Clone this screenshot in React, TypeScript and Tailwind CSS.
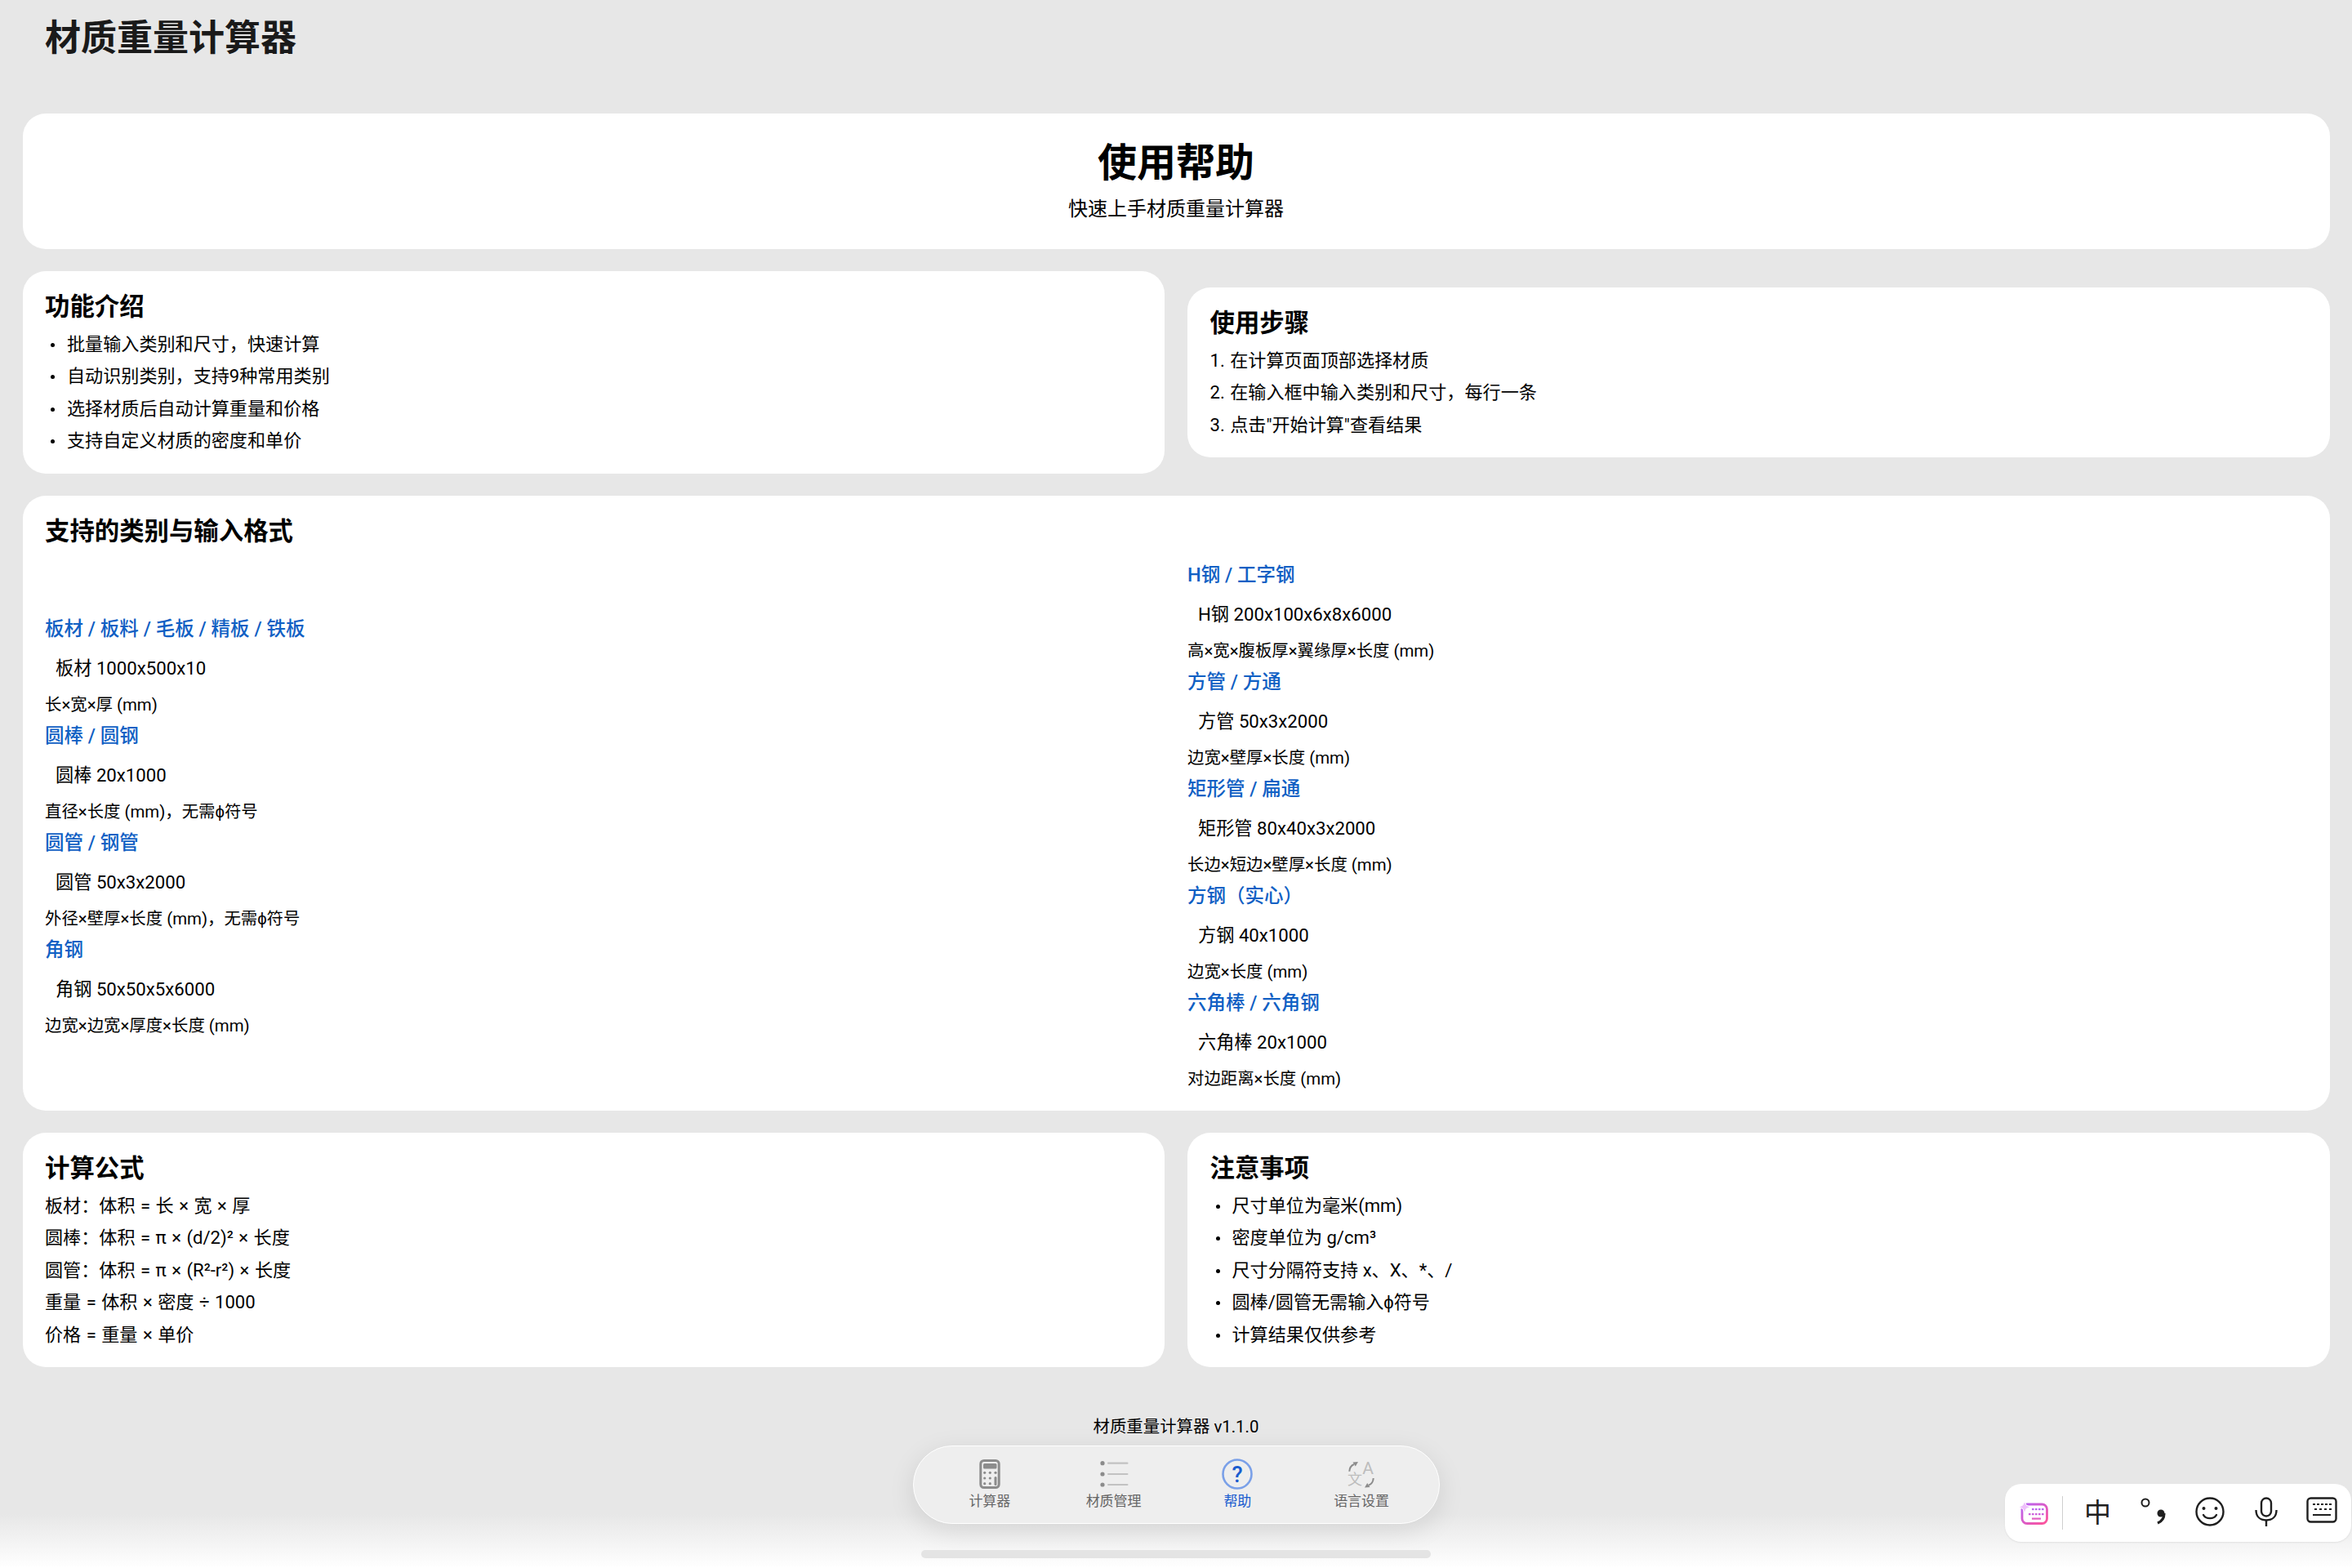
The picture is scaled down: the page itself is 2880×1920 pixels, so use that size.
import type React from "react";

const font = "font-['Roboto','Noto_Sans_CJK_SC',sans-serif]";

// full-width punctuation
const comma = "\uFF0C";
const colon = "\uFF1A";

const leftFormats = [
  { name: "板材 / 板料 / 毛板 / 精板 / 铁板", sample: "板材 1000x500x10", note: "长×宽×厚 (mm)" },
  { name: "圆棒 / 圆钢", sample: "圆棒 20x1000", note: `直径×长度 (mm)${comma}无需ϕ符号` },
  { name: "圆管 / 钢管", sample: "圆管 50x3x2000", note: `外径×壁厚×长度 (mm)${comma}无需ϕ符号` },
  { name: "角钢", sample: "角钢 50x50x5x6000", note: "边宽×边宽×厚度×长度 (mm)" }
];

const rightFormats = [
  { name: "H钢 / 工字钢", sample: "H钢 200x100x6x8x6000", note: "高×宽×腹板厚×翼缘厚×长度 (mm)" },
  { name: "方管 / 方通", sample: "方管 50x3x2000", note: "边宽×壁厚×长度 (mm)" },
  { name: "矩形管 / 扁通", sample: "矩形管 80x40x3x2000", note: "长边×短边×壁厚×长度 (mm)" },
  { name: "方钢\uFF08实心\uFF09", sample: "方钢 40x1000", note: "边宽×长度 (mm)" },
  { name: "六角棒 / 六角钢", sample: "六角棒 20x1000", note: "对边距离×长度 (mm)" }
];

function Card({ className = "", children }: { className?: string; children: React.ReactNode }) {
  return <section className={`rounded-[28px] bg-white px-[27.5px] ${className}`}>{children}</section>;
}

function CardTitle({ children }: { children: React.ReactNode }) {
  return <h2 className="text-[30.4px] font-bold leading-[44px] text-black">{children}</h2>;
}

function Line({ children }: { children: React.ReactNode }) {
  return <p className="text-[22.1px] leading-[39.4px] text-black [word-spacing:1px]">{children}</p>;
}

function Bullet({ children }: { children: React.ReactNode }) {
  return (
    <li className="relative pl-[27px] text-[22.1px] leading-[39.4px] text-black">
      <span className="absolute left-[7px] top-[18px] h-[5px] w-[5px] rounded-full bg-black" />
      {children}
    </li>
  );
}

function FormatColumn({ items }: { items: typeof leftFormats }) {
  return (
    <div>
      {items.map((item) => (
        <div key={item.name} className="pb-[3px]">
          <h3 className="text-[23.5px] font-medium leading-[38px] text-[#1060c4]">{item.name}</h3>
          <p className="mt-[11px] pl-[13px] text-[22.2px] leading-[36px] text-black">{item.sample}</p>
          <p className="mt-[11px] text-[20.4px] leading-[32px] text-black">{item.note}</p>
        </div>
      ))}
    </div>
  );
}

function CalculatorIcon() {
  return (
    <svg width="36" height="36" viewBox="0 0 36 36" fill="#8c8c8c">
      <rect x="6.800" y="1.500" width="22.400" height="33" rx="4" fill="none" stroke="#8c8c8c" strokeWidth="3" />
      <rect x="10" y="5" width="16.500" height="6.500" rx="1.500" />
      {[11.700, 18.300, 25].map((x) => (
        <circle key={x} cx={x} cy="16.300" r="1.600" />
      ))}
      {[11.700, 18.300].map((x) => (
        <circle key={x} cx={x} cy="23" r="1.600" />
      ))}
      {[11.700, 18.300].map((x) => (
        <circle key={x} cx={x} cy="29.700" r="1.600" />
      ))}
      <rect x="23.500" y="21" width="3" height="11" rx="1.500" />
    </svg>
  );
}

function ListIcon() {
  return (
    <svg width="36" height="36" viewBox="0 0 36 36">
      {[4.700, 18, 31].map((y) => (
        <g key={y}>
          <circle cx="4" cy={y} r="2.600" fill="#8c8c8c" />
          <rect x="10" y={y - 1.100} width="25.500" height="2.200" rx="1.100" fill="#c2c2c2" />
        </g>
      ))}
    </svg>
  );
}

function HelpIcon() {
  return (
    <svg width="38" height="38" viewBox="0 0 38 38" className="-my-[1px]">
      <circle cx="19" cy="19" r="17.500" fill="none" stroke="#7aa0e8" strokeWidth="2.600" />
      <text x="19" y="28.500" textAnchor="middle" fontSize="27" fontWeight="500" fill="#1a5ccf" fontFamily="Roboto, sans-serif">
        ?
      </text>
    </svg>
  );
}

function LanguageIcon() {
  return (
    <svg width="36" height="36" viewBox="0 0 36 36">
      <text x="26" y="18" textAnchor="middle" fontSize="21" fill="#bdbdbd" fontFamily="Roboto, sans-serif">
        A
      </text>
      <text x="10" y="31" textAnchor="middle" fontSize="18" fill="#bdbdbd" fontFamily="'Noto Sans CJK SC', sans-serif">
        文
      </text>
      <path d="M3.300 14.700C3.500 10.500 5.500 7.500 9 6" fill="none" stroke="#8c8c8c" strokeWidth="2" />
      <path d="M7.500 3.500L14 3l-3.200 5.500z" fill="#8c8c8c" />
      <path d="M32.700 23c-.2 4.200-2.200 7.200-5.700 8.700" fill="none" stroke="#8c8c8c" strokeWidth="2" />
      <path d="M28.500 34l-6.500.5 3.200-5.500z" fill="#8c8c8c" />
    </svg>
  );
}

function TabBar() {
  const tabs = [
    { label: "计算器", icon: <CalculatorIcon />, active: false },
    { label: "材质管理", icon: <ListIcon />, active: false },
    { label: "帮助", icon: <HelpIcon />, active: true },
    { label: "语言设置", icon: <LanguageIcon />, active: false }
  ];
  return (
    <nav className="absolute left-[1118px] top-[1770px] grid h-[96px] w-[645px] grid-cols-4 rounded-[48px] border border-white bg-[#eeeeee] pl-[17px] pr-[19px] pt-[16px] shadow-[0_8px_32px_rgba(0,0,0,0.10)]">
      {tabs.map((tab) => (
        <div key={tab.label} className="flex flex-col items-center">
          {tab.icon}
          <span className={`mt-[4px] text-[17px] leading-[22px] ${tab.active ? "text-[#1a5ccf]" : "text-[#666666]"}`}>
            {tab.label}
          </span>
        </div>
      ))}
    </nav>
  );
}

function ImeBar() {
  return (
    <div className="absolute left-[2455px] top-[1817px] flex h-[71px] w-[424px] items-center rounded-[20px] bg-white pl-[17px] shadow-[0_1px_2px_rgba(0,0,0,0.08)]">
      <svg width="38" height="30" viewBox="0 0 38 30">
        <defs>
          <linearGradient id="ime-ai" x1="0" y1="0" x2="1" y2="1">
            <stop offset="0" stopColor="#b562f5" />
            <stop offset="1" stopColor="#ff5599" />
          </linearGradient>
        </defs>
        <rect x="4" y="4" width="30.500" height="23.500" rx="6" fill="none" stroke="url(#ime-ai)" strokeWidth="2.800" />
        <path d="M7 0l2 5 5 2.500-5 2-2 5.500-2-5.500-5-2 5-2.500z" fill="#eec0fb" stroke="#fff" strokeWidth="1" />
        {[16, 20, 24, 28].map((x) => (
          <rect key={x} x={x} y="9" width="2.600" height="2.200" fill="#b868ee" />
        ))}
        {[12, 16, 20, 24, 28].map((x) => (
          <rect key={x} x={x} y="15" width="2.600" height="2.200" fill="#cc60dc" />
        ))}
        <rect x="16" y="20.500" width="11" height="2.200" fill="#e260c4" />
      </svg>
      <div className="ml-[15px] h-[41px] w-[1px] bg-[#cfcfcf]" />
      <div className="ml-[8px] flex">
        <div className="flex w-[68.75px] justify-center text-[33px] leading-[40px] text-[#1f1f1f]">中</div>
        <div className="flex w-[68.75px] justify-center">
          <svg width="34" height="36" viewBox="0 0 34 36" fill="none">
            <circle cx="7" cy="7" r="4.500" stroke="#1f1f1f" strokeWidth="2" />
            <circle cx="26" cy="20" r="4.500" fill="#1f1f1f" />
            <path d="M30 20c0 6-3 10-8 12" stroke="#1f1f1f" strokeWidth="3.200" />
          </svg>
        </div>
        <div className="flex w-[68.75px] justify-center">
          <svg width="36" height="36" viewBox="0 0 36 36" fill="none" stroke="#1f1f1f" strokeWidth="2.400">
            <circle cx="18" cy="18" r="16.500" />
            <circle cx="10.500" cy="14" r="2" fill="#1f1f1f" stroke="none" />
            <circle cx="25.500" cy="14" r="2" fill="#1f1f1f" stroke="none" />
            <path d="M10 22c3 5.500 13 5.500 16 0" strokeLinecap="round" />
          </svg>
        </div>
        <div className="flex w-[68.75px] justify-center">
          <svg width="28" height="36" viewBox="0 0 28 36" fill="none" stroke="#1f1f1f" strokeWidth="2.400">
            <rect x="8" y="1.500" width="12" height="22" rx="6" />
            <path d="M1.500 16c0 8 5 12.500 12.500 12.500S26.500 24 26.500 16" />
            <path d="M14 28.500V36" />
          </svg>
        </div>
        <div className="flex w-[68.75px] justify-center">
          <svg width="38" height="32" viewBox="0 0 38 32" fill="none" stroke="#1f1f1f" strokeWidth="2.400">
            <rect x="1.500" y="1.500" width="35" height="29" rx="4" />
            {[8, 13, 18, 23, 28].map((x) => (
              <path key={x} d={`M${x} 9h3`} strokeWidth="2" />
            ))}
            {[10, 16, 22, 28].map((x) => (
              <path key={x} d={`M${x} 15h3`} strokeWidth="2" />
            ))}
            <path d="M8 22h22" strokeWidth="2" />
          </svg>
        </div>
      </div>
    </div>
  );
}

export default function App() {
  return (
    <div className={`relative h-[1920px] w-[2880px] overflow-hidden bg-[#e7e7e7] ${font}`}>
      <header className="pl-[55px] pt-[18px]">
        <h1 className="text-[44px] font-bold leading-[58px] text-[#1a1a1a]">材质重量计算器</h1>
      </header>

      <main className="mt-[63px] flex flex-col gap-[27px] px-[27.5px]">
        <Card className="flex h-[166px] flex-col items-center justify-center pb-[2px]">
          <h2 className="text-[48px] font-bold leading-[64px] text-black">使用帮助</h2>
          <p className="mt-[6px] text-[24px] leading-[36px] text-black">快速上手材质重量计算器</p>
        </Card>

        <div className="grid grid-cols-2 items-center gap-x-[28px]">
          <Card className="h-[248px] pt-[22px]">
            <CardTitle>功能介绍</CardTitle>
            <ul className="mt-[4px]">
              <Bullet>{`批量输入类别和尺寸${comma}快速计算`}</Bullet>
              <Bullet>{`自动识别类别${comma}支持9种常用类别`}</Bullet>
              <Bullet>选择材质后自动计算重量和价格</Bullet>
              <Bullet>支持自定义材质的密度和单价</Bullet>
            </ul>
          </Card>
          <Card className="h-[208px] pt-[22px]">
            <CardTitle>使用步骤</CardTitle>
            <div className="mt-[4px]">
              <Line>1. 在计算页面顶部选择材质</Line>
              <Line>{`2. 在输入框中输入类别和尺寸${comma}每行一条`}</Line>
              <Line>3. 点击"开始计算"查看结果</Line>
            </div>
          </Card>
        </div>

        <Card className="h-[753px] pt-[22px]">
          <CardTitle>支持的类别与输入格式</CardTitle>
          <div className="mt-[12px] grid grid-cols-2 items-center gap-x-[28px]">
            <FormatColumn items={leftFormats} />
            <FormatColumn items={rightFormats} />
          </div>
        </Card>

        <div className="grid grid-cols-2 gap-x-[28px]">
          <Card className="h-[287px] pt-[22px]">
            <CardTitle>计算公式</CardTitle>
            <div className="mt-[4px]">
              <Line>{`板材${colon}体积 = 长 × 宽 × 厚`}</Line>
              <Line>{`圆棒${colon}体积 = π × (d/2)² × 长度`}</Line>
              <Line>{`圆管${colon}体积 = π × (R²-r²) × 长度`}</Line>
              <Line>重量 = 体积 × 密度 ÷ 1000</Line>
              <Line>价格 = 重量 × 单价</Line>
            </div>
          </Card>
          <Card className="h-[287px] pt-[22px]">
            <CardTitle>注意事项</CardTitle>
            <ul className="mt-[4px]">
              <Bullet>尺寸单位为毫米(mm)</Bullet>
              <Bullet>密度单位为 g/cm³</Bullet>
              <Bullet>尺寸分隔符支持 x、X、*、/</Bullet>
              <Bullet>圆棒/圆管无需输入ϕ符号</Bullet>
              <Bullet>计算结果仅供参考</Bullet>
            </ul>
          </Card>
        </div>
      </main>

      <footer className="mt-[58px] text-center text-[20.4px] leading-[30px] text-black">材质重量计算器 v1.1.0</footer>

      <div className="absolute inset-x-0 bottom-0 h-[66px] bg-gradient-to-b from-[#e7e7e7] to-[#ffffff]" />
      <TabBar />
      <div className="absolute left-[1128px] top-[1898px] h-[10px] w-[624px] rounded-full bg-[#e4e4e4]" />
      <ImeBar />
    </div>
  );
}
